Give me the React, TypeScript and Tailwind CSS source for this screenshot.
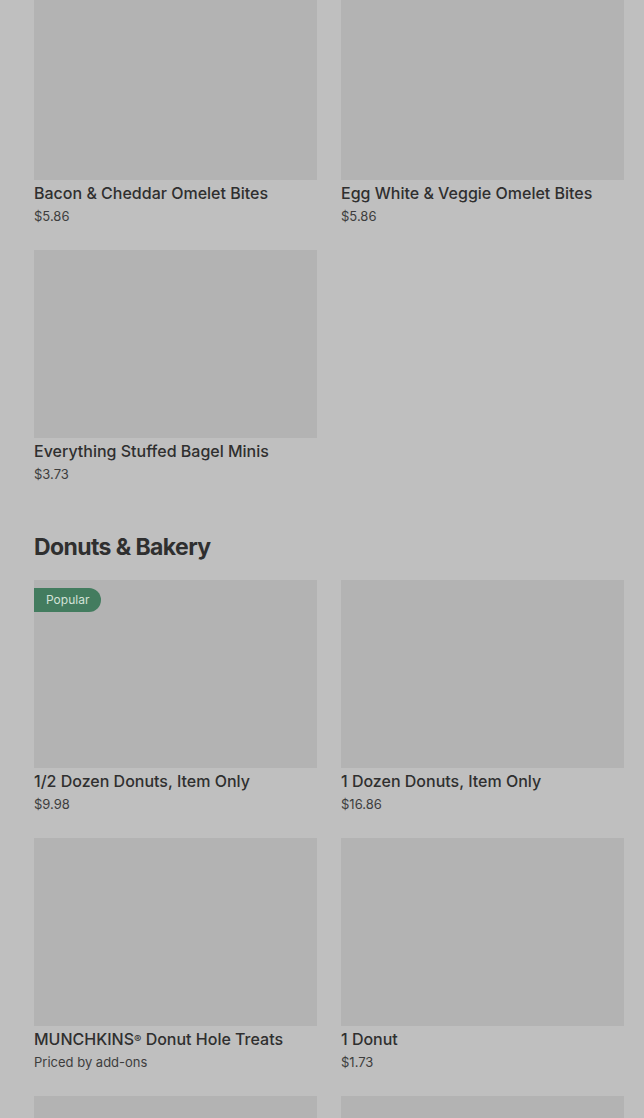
const font = { fontFamily: "Inter, 'Noto Sans', sans-serif" };

type Item = { name: string; price: string; popular?: boolean };

const breakfast: Item[] = [
  { name: "Bacon & Cheddar Omelet Bites", price: "$5.86" },
  { name: "Egg White & Veggie Omelet Bites", price: "$5.86" },
  { name: "Everything Stuffed Bagel Minis", price: "$3.73" },
];

const donuts: Item[] = [
  { name: "1/2 Dozen Donuts, Item Only", price: "$9.98", popular: true },
  { name: "1 Dozen Donuts, Item Only", price: "$16.86" },
  { name: "MUNCHKINS® Donut Hole Treats", price: "Priced by add-ons" },
  { name: "1 Donut", price: "$1.73" },
  { name: "", price: "" },
  { name: "", price: "" },
];

function ItemName({ name }: { name: string }) {
  // registered mark sits smaller in the reference
  const parts = name.split("®");
  if (parts.length === 1) return <>{name}</>;
  return (
    <>
      {parts[0]}
      <span className="text-[11px] align-top">®</span>
      {parts[1]}
    </>
  );
}

function ItemCard({ item }: { item: Item }) {
  return (
    <div className="flex flex-col">
      <div className="relative h-[188px] w-full bg-[#b3b3b3]">
        {item.popular && (
          <span className="absolute left-0 top-2 flex h-6 items-center rounded-r-full bg-[#437c5f] pl-3 pr-3 text-[12px] text-[#d3e2d8]">
            Popular
          </span>
        )}
      </div>
      <div className="mt-[2px] text-[16px] leading-[22px] font-medium text-[#2f2f2f]">
        <ItemName name={item.name} />
      </div>
      <div className="mt-[3px] text-[13px] leading-[18px] text-[#3d3d3d]">
        {item.price}
      </div>
    </div>
  );
}

export default function App() {
  return (
    <div className="min-h-screen bg-[#bfbfbf] overflow-hidden" style={font}>
      <div className="mt-[-8px] pl-[34px] pr-[20px]">
        <div className="grid grid-cols-2 gap-x-6 gap-y-[25px]">
          {breakfast.map((it, i) => (
            <ItemCard key={i} item={it} />
          ))}
        </div>

        <h2 className="mt-[48px] text-[23px] leading-8 font-bold tracking-[-0.6px] text-[#2f2f2f]">
          Donuts &amp; Bakery
        </h2>

        <div className="mt-[17px] grid grid-cols-2 gap-x-6 gap-y-[25px]">
          {donuts.map((it, i) => (
            <ItemCard key={i} item={it} />
          ))}
        </div>
      </div>
    </div>
  );
}
